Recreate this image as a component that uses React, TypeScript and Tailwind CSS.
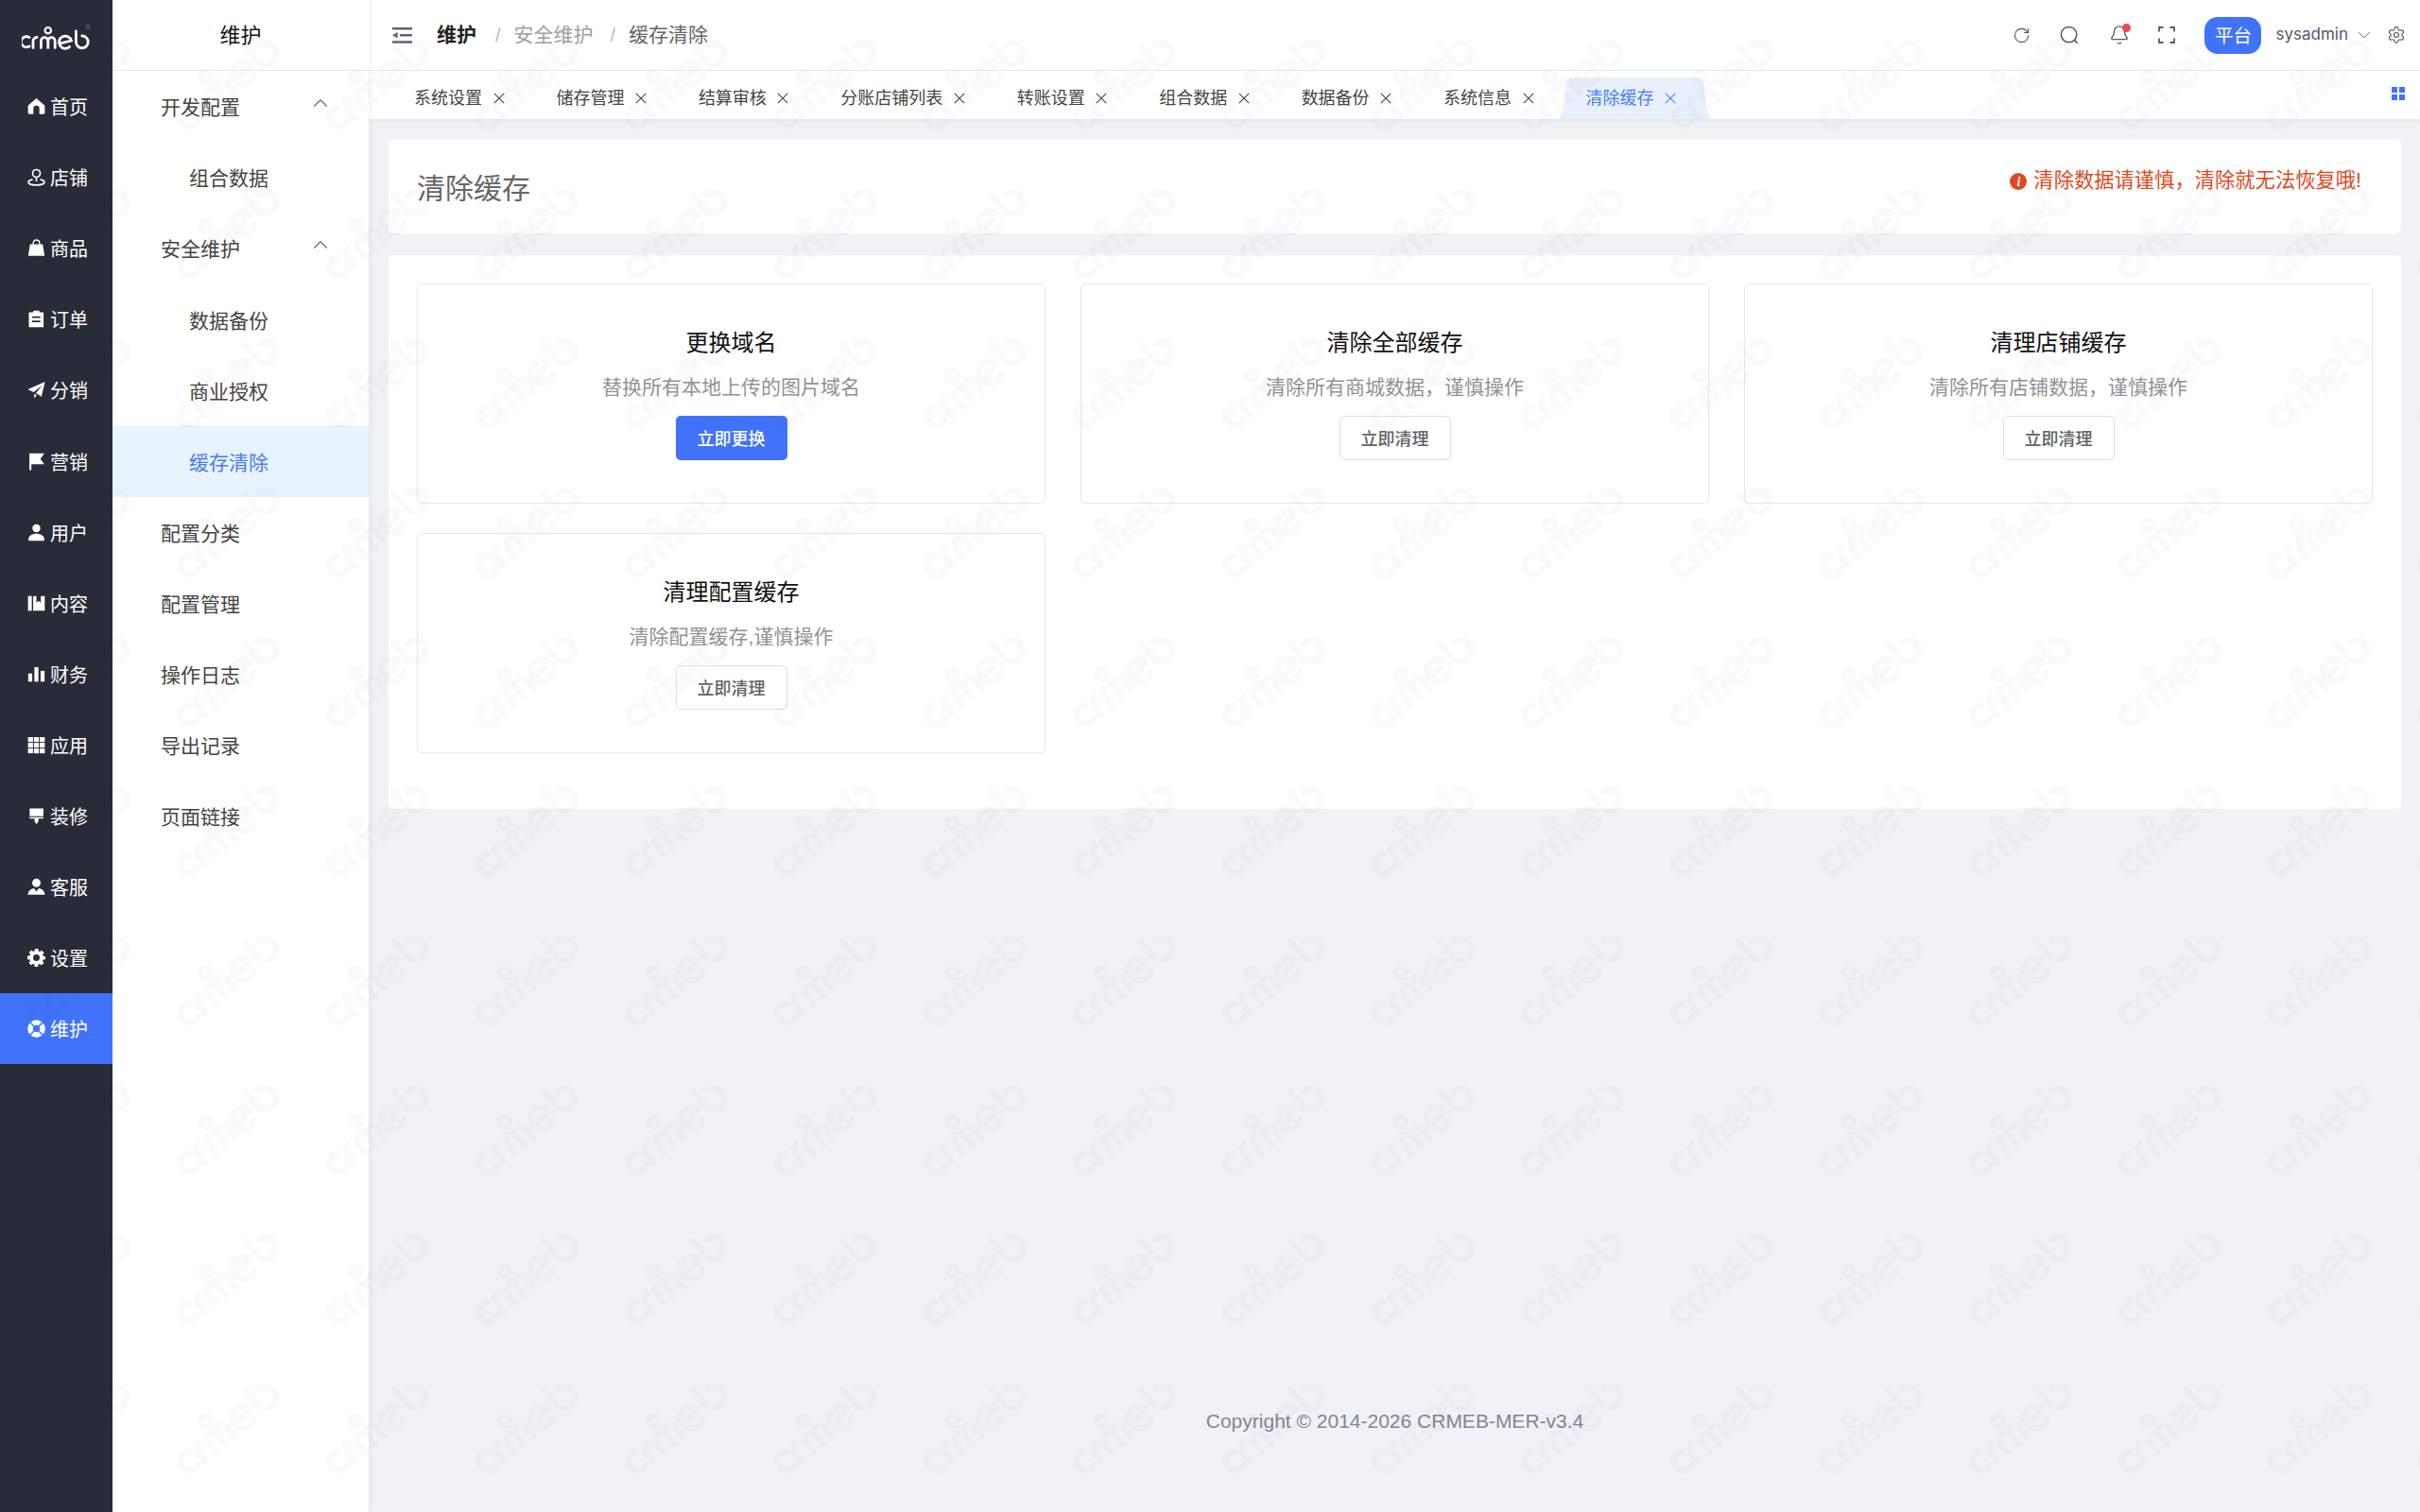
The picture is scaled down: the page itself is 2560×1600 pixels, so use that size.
import type { ReactNode } from "react";
import { Bell, ChevronDown, ChevronUp, RotateCw, Settings } from "lucide-react";

function LogoMarks({ color, stroke = 2.8 }: { color: string; stroke?: number }) {
  return (
    <g fill="none" stroke={color} strokeWidth={stroke} strokeLinecap="round">
      <path d="M8 13.6A5.6 5.6 0 1 0 8 23" />
      <path d="M12 24.5V17.5A4 4 0 0 1 16 13.5" />
      <path d="M20.4 24.5V17.4A3.7 3.7 0 0 1 27.8 17.4V24.5" />
      <path d="M27.8 17.4A3.7 3.7 0 0 1 35.2 17.4V24.5" />
      <circle cx="27.8" cy="6.2" r="3.2" strokeWidth={stroke - 0.6} />
      <path d="M40 20.2L52.4 17A6.6 6.6 0 1 0 50.6 23.6" />
      <path d="M57.4 7V18.4A6.4 6.4 0 1 0 63.8 12" />
    </g>
  );
}

function SideIcon({ children }: { children: ReactNode }) {
  return (
    <svg viewBox="0 0 18 18" className="h-[19px] w-[19px] shrink-0" fill="#ffffff">
      {children}
    </svg>
  );
}

const primaryNav: { label: string; icon: ReactNode; active?: boolean }[] = [
  { label: "首页", icon: <path d="M9 1L17.4 8.2V15.5C17.4 16.3 16.9 16.8 16 16.8H12V11.2A3 3 0 0 0 6 11.2V16.8H2C1.1 16.8.6 16.3.6 15.5V8.2Z" /> },
  {
    label: "店铺",
    icon: (
      <g fill="none" stroke="#ffffff" strokeWidth="1.6">
        <circle cx="9" cy="5.2" r="3.8" />
        <path d="M9 9V13.2" />
        <path d="M5.2 11.2C2.8 11.7 1 12.6 1 14C1 15.7 4.6 16.9 9 16.9S17 15.7 17 14C17 12.6 15.2 11.7 12.8 11.2" />
      </g>
    ),
  },
  {
    label: "商品",
    icon: (
      <>
        <path d="M2.6 5.2H15.4L17.2 16.8H.8Z" />
        <path d="M5.8 7V4.2A3.2 3.2 0 0 1 12.2 4.2V7" fill="none" stroke="#ffffff" strokeWidth="1.3" />
      </>
    ),
  },
  {
    label: "订单",
    icon: (
      <path
        fillRule="evenodd"
        d="M6 .6H12V2.4H16.2V17.4H1.4V2.4H6ZM4.6 6.4V8H13V6.4ZM4.6 10.6V12.2H13V10.6Z"
      />
    ),
  },
  { label: "分销", icon: <path d="M17.6 1L14 15.8L8.6 12.4L14.8 4.4L6.2 11.4L.4 8.6ZM6.8 13L9.4 14.6L6.8 17.2Z" /> },
  { label: "营销", icon: <path d="M2 .8H17L13 6.4L17 11.6H4V17.6H2Z" /> },
  {
    label: "用户",
    icon: (
      <>
        <circle cx="9" cy="4.8" r="4" />
        <path d="M1 16.4C1 12.4 4.4 10.2 9 10.2S17 12.4 17 16.4C17 17 16.5 17.4 16 17.4H2C1.5 17.4 1 17 1 16.4Z" />
      </>
    ),
  },
  {
    label: "内容",
    icon: (
      <>
        <path d="M.6 1.6H4.4V16.4H.6Z" />
        <path d="M5.8 1.6H9V8.4L11.2 6.4L13.4 8.4V1.6H17.4V16.4H5.8Z" />
      </>
    ),
  },
  {
    label: "财务",
    icon: (
      <>
        <path d="M.8 8.2H4.8V16.4H.8Z" />
        <path d="M7 1.8H11V16.4H7Z" />
        <path d="M13.2 5.6H17.2V16.4H13.2Z" />
      </>
    ),
  },
  {
    label: "应用",
    icon: (
      <>
        {[1, 6.7, 12.4].map((y) =>
          [.6, 6.5, 12.4].map((x) => <rect key={`${x}-${y}`} x={x} y={y} width="5" height="4.8" />),
        )}
      </>
    ),
  },
  {
    label: "装修",
    icon: (
      <>
        <path d="M2.2 1.4H16V9.2H2.2Z" />
        <path d="M2.2 10.2H16V11.6H11V14.5L9.1 17.4L7.2 14.5V11.6H2.2Z" />
      </>
    ),
  },
  {
    label: "客服",
    icon: (
      <>
        <circle cx="9" cy="5" r="4.2" />
        <path d="M.4 16.8C1 12.8 3.4 10.8 6.6 10.4L9 13.4L11.4 10.4C14.6 10.8 17 12.8 17.6 16.8Z" />
      </>
    ),
  },
  {
    label: "设置",
    icon: (
      <g fill="none" stroke="#ffffff">
        <circle cx="9" cy="9" r="5.2" strokeWidth="3.8" />
        <circle cx="9" cy="9" r="7.5" strokeWidth="3" strokeDasharray="3.4 2.49" strokeDashoffset="1.7" />
      </g>
    ),
  },
  {
    label: "维护",
    active: true,
    icon: (
      <>
        <circle cx="9" cy="9" r="8.8" />
        <circle cx="9" cy="9" r="3.6" fill="#4073fa" />
        <path d="M2.6 2.6L6.4 6.4M15.4 2.6L11.6 6.4M2.6 15.4L6.4 11.6M15.4 15.4L11.6 11.6" stroke="#4073fa" strokeWidth="1.5" />
      </>
    ),
  },
];

const secondaryNav: { label: string; sub?: boolean; open?: boolean; active?: boolean }[] = [
  { label: "开发配置", open: true },
  { label: "组合数据", sub: true },
  { label: "安全维护", open: true },
  { label: "数据备份", sub: true },
  { label: "商业授权", sub: true },
  { label: "缓存清除", sub: true, active: true },
  { label: "配置分类" },
  { label: "配置管理" },
  { label: "操作日志" },
  { label: "导出记录" },
  { label: "页面链接" },
];

const tabs = ["系统设置", "储存管理", "结算审核", "分账店铺列表", "转账设置", "组合数据", "数据备份", "系统信息", "清除缓存"];

const cards = [
  { title: "更换域名", desc: "替换所有本地上传的图片域名", action: "立即更换", primary: true },
  { title: "清除全部缓存", desc: "清除所有商城数据，谨慎操作", action: "立即清理" },
  { title: "清理店铺缓存", desc: "清除所有店铺数据，谨慎操作", action: "立即清理" },
  { title: "清理配置缓存", desc: "清除配置缓存,谨慎操作", action: "立即清理" },
];

function CloseIcon() {
  return (
    <svg viewBox="0 0 12 12" className="ml-[11.5px] h-3 w-3 shrink-0" fill="none" stroke="currentColor" strokeWidth="1.1">
      <path d="M.8.8L11.2 11.2M11.2.8L.8 11.2" />
    </svg>
  );
}

export default function App() {
  return (
    <div className="relative flex h-screen w-screen overflow-hidden bg-[#f0f2f6] font-['Liberation_Sans','Noto_Sans_CJK_SC',sans-serif]">
      {/* Primary nav */}
      <aside className="flex w-[119px] shrink-0 flex-col bg-[#282c38]">
        <div className="relative h-[75px] shrink-0">
          <svg viewBox="0 0 72 28" className="absolute top-[26px] left-[23px] h-[28px] w-[72px]">
            <LogoMarks color="#ffffff" />
            <circle cx="70" cy="2.2" r="1.9" fill="none" stroke="#8b8e97" strokeWidth=".6" />
          </svg>
        </div>
        {primaryNav.map((item) => (
          <div
            key={item.label}
            className={`flex h-[75.1px] items-center gap-[5px] pl-[29px] text-[20px] text-white ${item.active ? "bg-[#4073fa]" : ""}`}
          >
            <SideIcon>{item.icon}</SideIcon>
            <span className="pt-[3px]">{item.label}</span>
          </div>
        ))}
      </aside>

      {/* Secondary nav */}
      <aside className="relative z-10 w-[271px] shrink-0 bg-white shadow-[2px_0_6px_rgba(0,0,0,0.05)]">
        <div className="flex h-[75px] items-center justify-center border-b border-[#e8e8e8] text-[22px] text-[#111]">维护</div>
        {secondaryNav.map((item) => (
          <div
            key={item.label}
            className={`relative flex h-[75.1px] items-center pt-[3px] text-[21px] ${item.sub ? "pl-[81px]" : "pl-[51px]"} ${
              item.active ? "bg-[#e8f3fe] text-[#4a7ef0]" : "text-[#444]"
            }`}
          >
            {item.label}
            {item.open && (
              <ChevronUp size={26} strokeWidth={1} className="absolute top-[21px] left-[207px] text-[#666]" />
            )}
          </div>
        ))}
      </aside>

      {/* Main */}
      <div className="flex min-w-0 flex-1 flex-col">
        <header className="flex h-[75px] shrink-0 items-center border-b border-[#e8e8e8] bg-white pr-[15px] pl-[25px]">
          <svg viewBox="0 0 21 17" className="h-[17px] w-[21px]" fill="#5e6478">
            <path d="M0 0H21V2.6H0ZM8 7H21V9.6H8ZM0 14.2H21V16.8H0ZM0 8.3L5.6 5V11.6Z" />
          </svg>
          <span className="ml-[26px] text-[21px] font-bold text-[#222]">维护</span>
          <span className="ml-[20px] text-[20px] text-[#bbb]">/</span>
          <span className="ml-[14px] text-[21px] text-[#a0a0a0]">安全维护</span>
          <span className="ml-[18px] text-[20px] text-[#bbb]">/</span>
          <span className="ml-[14px] text-[21px] text-[#666]">缓存清除</span>

          <div className="ml-auto flex items-center text-[#515a6e]">
            <RotateCw size={19} strokeWidth={1.4} />
            <svg viewBox="0 0 20 20" className="ml-[31px] h-5 w-5" fill="none" stroke="currentColor" strokeWidth="1.5">
              <circle cx="9.6" cy="9.6" r="8.2" />
              <path d="M15.6 15.6L18.6 18.6" />
            </svg>
            <div className="relative ml-[32px] h-[22px] w-[22px]">
              <Bell size={22} strokeWidth={1.5} />
              <span className="absolute -top-[1px] -right-[1px] h-[9px] w-[9px] rounded-full bg-[#f0484e]" />
            </div>
            <svg viewBox="0 0 18 18" className="ml-[30px] h-[18px] w-[18px]" fill="none" stroke="currentColor" strokeWidth="1.8">
              <path d="M1 5.5V1H5.5M12.5 1H17V5.5M17 12.5V17H12.5M5.5 17H1V12.5" />
            </svg>
            <div className="ml-[31px] flex h-[39px] w-[60px] items-center justify-center rounded-[14px] bg-[#4073fa] pt-[3px] text-[19.5px] text-white">平台</div>
            <span className="ml-[15px] font-['Inter',sans-serif] text-[17px]">sysadmin</span>
            <ChevronDown size={22} strokeWidth={1} className="ml-[6px]" />
            <Settings size={20} strokeWidth={1.4} className="ml-[13px]" />
          </div>
        </header>

        <nav className="relative z-[1] flex h-[51px] shrink-0 items-center bg-white pl-[48px] text-[18px] text-[#444] shadow-[0_2px_4px_rgba(0,0,0,0.05)]">
          {tabs.map((tab, i) => {
            const active = i === tabs.length - 1;
            return (
              <div key={tab} className={`relative flex h-full items-center pt-[7px] pr-[54.95px] ${active ? "text-[#4a7ef0]" : ""}`}>
                {active && (
                  <div className="absolute top-[7px] bottom-0 -left-[28px] w-[160px] bg-[#e8f0fe] [clip-path:polygon(0_100%,3%_70%,4.5%_12%,7%_0,93%_0,95.5%_12%,97%_70%,100%_100%)]" />
                )}
                <span className="relative">{tab}</span>
                <span className="relative">
                  <CloseIcon />
                </span>
              </div>
            );
          })}
          <div className="absolute top-[17px] right-[16px] grid grid-cols-2 gap-[2px]">
            {[0, 1, 2, 3].map((n) => (
              <span key={n} className="h-[6px] w-[6px] bg-[#4073fa]" />
            ))}
          </div>
        </nav>

        <main className="flex min-h-0 flex-1 flex-col px-[20px] pt-[21px] pl-[21px]">
          <section className="flex h-[100px] shrink-0 justify-between rounded-[5px] bg-white pr-[42px] pl-[30px]">
            <h1 className="mt-[35px] text-[30px] leading-[36px] font-normal text-[#666]">清除缓存</h1>
            <div className="mt-[30px] flex h-[30px] items-center gap-[7px] text-[21.3px] text-[#e0481e]">
              <span className="flex h-[18px] w-[18px] items-center justify-center rounded-full bg-[#e0481e] font-['Liberation_Serif',serif] text-[14px] font-bold text-white italic">i</span>
              清除数据请谨慎，清除就无法恢复哦!
            </div>
          </section>

          <section className="mt-[23px] shrink-0 rounded-[5px] bg-white px-[30px] pt-[30px] pb-[59px]">
            <div className="grid grid-cols-3 gap-x-[37px] gap-y-[31px]">
              {cards.map((card) => (
                <div key={card.title} className="flex h-[233px] flex-col items-center rounded-[5px] border border-[#e4e7ed] pt-[46px]">
                  <div className="text-[24px] leading-[32px] text-[#111]">{card.title}</div>
                  <div className="mt-[16px] text-[21px] leading-[30px] text-[#909399]">{card.desc}</div>
                  <button
                    className={`mt-[15px] h-[47px] w-[118px] rounded-[5px] pt-[3px] text-[18px] ${
                      card.primary ? "bg-[#4073fa] font-medium text-white" : "border border-[#dcdfe6] bg-white font-medium text-[#606266]"
                    }`}
                  >
                    {card.action}
                  </button>
                </div>
              ))}
            </div>
          </section>

          <footer className="mt-auto pb-[84px] text-center text-[21px] leading-[24px] text-[#808695]">Copyright © 2014-2026 CRMEB-MER-v3.4</footer>
        </main>
      </div>

      {/* Watermark layer */}
      <svg className="pointer-events-none absolute inset-0 z-20 h-full w-full">
        <defs>
          <pattern id="wm" width="158" height="158" patternUnits="userSpaceOnUse">
            <g transform="translate(81 84) rotate(-40) scale(1.78) translate(-36 -15)" opacity="0.018">
              <LogoMarks color="#000000" stroke={3.4} />
            </g>
          </pattern>
        </defs>
        <rect width="100%" height="100%" fill="url(#wm)" />
      </svg>
    </div>
  );
}
